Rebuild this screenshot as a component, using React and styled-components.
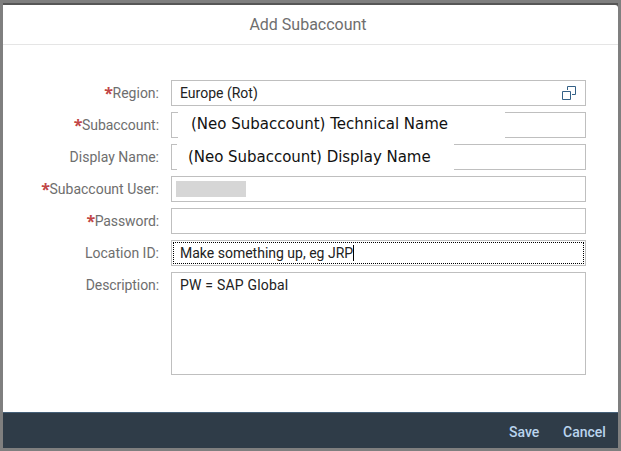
import React from "react";
import styled, { createGlobalStyle } from "styled-components";

const GlobalStyle = createGlobalStyle`
  * { box-sizing: border-box; }
  html, body { margin: 0; overflow: hidden; }
  body { font-family: Roboto, "Open Sans", sans-serif; }
`;

const Backdrop = styled.div`
  width: 621px;
  height: 451px;
  padding: 3px;
  background: #7f7f7f;
`;

const Dialog = styled.div`
  display: flex;
  flex-direction: column;
  height: 445px;
  border-top: 2px solid #565656;
  background: #565656;
`;

const Header = styled.header`
  height: 40px;
  border-bottom: 1px solid #e5e5e5;
  border-top-right-radius: 3px;
  background: #fff;
  color: #6e6e6e;
  font-size: 16px;
  line-height: 40px;
  text-align: center;
  letter-spacing: ${(p) => p.$spacing}px;
  padding-right: 1px;
  padding-left: 0;
  text-indent: -4px;
`;

const Form = styled.form`
  flex: 1;
  display: flex;
  flex-direction: column;
  gap: 6px;
  padding: 35px 32px 0 0;
  background: #fff;
`;

const Row = styled.div`
  display: grid;
  grid-template-columns: 156px 415px;
  column-gap: 12px;
`;

const Label = styled.label`
  display: flex;
  justify-content: flex-end;
  height: 26px;
  color: #6e6e6e;
  font-size: 14px;
  line-height: 27px;
  white-space: nowrap;
  letter-spacing: ${(p) => p.$spacing || 0}px;
`;

const Required = styled.span`
  color: #c14646;
  font-family: "Open Sans", sans-serif;
  font-size: 16px;
  font-weight: 700;
  line-height: 26px;
  letter-spacing: -0.5px;
`;

const Field = styled.div`
  display: flex;
  align-items: ${(p) => (p.$tall ? "flex-start" : "center")};
  position: relative;
  height: ${(p) => (p.$tall ? 103 : 26)}px;
  padding: 0 8px;
  border: 1px solid #bfbfbf;
  background: #fff;
  ${(p) => p.$focused && "outline: 1px dotted #000; outline-offset: -3px;"}
`;

const Value = styled.span`
  color: #222;
  font-size: 14px;
  line-height: 25px;
  white-space: nowrap;
  letter-spacing: ${(p) => p.$spacing || 0}px;
`;

const Caret = styled.span`
  width: 1px;
  height: 16px;
  background: #000;
`;

const Redaction = styled.span`
  width: 70px;
  height: 16px;
  margin-left: -4px;
  background: #d6d6d6;
`;

const Note = styled.span`
  position: absolute;
  top: -2px;
  left: ${(p) => p.$left}px;
  width: ${(p) => p.$width}px;
  height: 28px;
  padding-left: ${(p) => p.$pad}px;
  background: #fff;
  color: #111;
  font-family: "DejaVu Sans", sans-serif;
  font-size: 15px;
  line-height: ${(p) => p.$line}px;
  letter-spacing: ${(p) => p.$spacing}px;
  white-space: nowrap;
`;

const HelpIcon = styled.svg`
  width: 14px;
  height: 14px;
  margin-left: auto;
  margin-right: 1px;
`;

const Footer = styled.footer`
  display: flex;
  justify-content: flex-end;
  gap: 24px;
  height: 36px;
  padding-right: 12px;
  border-top: 1px solid #456078;
  background: #2f3c48;
`;

const Action = styled.button`
  width: ${(p) => p.$width}px;
  padding: 0;
  border: 0;
  background: none;
  color: #bad4ee;
  font: 500 14px/39px Roboto, "Open Sans", sans-serif;
  letter-spacing: ${(p) => p.$spacing}px;
  text-align: left;
  white-space: nowrap;
`;

function FormRow({ label, required, spacing, children, ...field }) {
  return (
    <Row>
      <Label $spacing={spacing}>
        {required && <Required>*</Required>}
        {label}:
      </Label>
      <Field {...field}>{children}</Field>
    </Row>
  );
}

export default function App() {
  return (
    <>
      <GlobalStyle />
      <Backdrop>
        <Dialog>
          <Header $spacing={0}>Add Subaccount</Header>
          <Form>
            <FormRow label="Region" required>
              <Value>Europe (Rot)</Value>
              <HelpIcon viewBox="0 0 14 14" fill="none" stroke="#346187">
                <path d="M5.5 4V.5h8v8H10M.5 5.5h8v8h-8z" />
              </HelpIcon>
            </FormRow>
            <FormRow label="Subaccount" required spacing={-0.05}>
              <Note $left={6} $width={327} $pad={13} $line={26} $spacing={0}>
                (Neo Subaccount) Technical Name
              </Note>
            </FormRow>
            <FormRow label="Display Name">
              <Note $left={5} $width={277} $pad={11} $line={28} $spacing={-0.03}>
                (Neo Subaccount) Display Name
              </Note>
            </FormRow>
            <FormRow label="Subaccount User" required>
              <Redaction />
            </FormRow>
            <FormRow label="Password" required spacing={-0.1}>
            </FormRow>
            <FormRow label="Location ID" $focused>
              <Value>Make something up, eg JRP</Value>
              <Caret />
            </FormRow>
            <FormRow label="Description" spacing={-0.08} $tall>
              <Value $spacing={0.2}>PW = SAP Global</Value>
            </FormRow>
          </Form>
          <Footer>
            <Action type="button" $width={30} $spacing={0}>Save</Action>
            <Action type="button" $width={43} $spacing={0}>Cancel</Action>
          </Footer>
        </Dialog>
      </Backdrop>
    </>
  );
}
